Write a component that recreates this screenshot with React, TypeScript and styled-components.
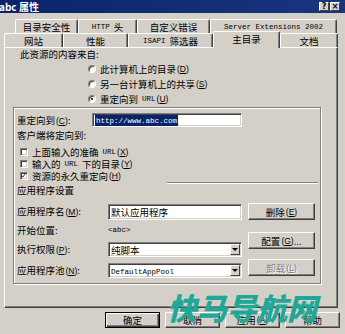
import styled, { createGlobalStyle } from "styled-components";

const GlobalStyle = createGlobalStyle`
  html, body {
    margin: 0;
    padding: 0;
    background: #d4d0c8;
    overflow: hidden;
  }
  body {
    font-family: "Noto Sans CJK SC", "DejaVu Sans", sans-serif;
    font-size: 9.5px;
    color: #000;
  }
`;

function Lat({ children }: { children: React.ReactNode }) {
  return <Mono>{children}</Mono>;
}

// accelerator key, e.g. (D)
function Acc({ k }: { k: string }) {
  return (
    <AccKey>
      (<U>{k}</U>)
    </AccKey>
  );
}

const App: React.FC = () => {
  const topTabs = [
    { label: <>目录安全性</>, w: 63 },
    { label: <><Lat>HTTP</Lat><Gap />头</>, w: 59 },
    { label: <>自定义错误</>, w: 73 },
    { label: <Lat>Server Extensions 2002</Lat>, w: 127 },
  ];

  const frontTabs = [
    { label: <>网站</>, w: 59 },
    { label: <>性能</>, w: 65 },
    { label: <><Lat>ISAPI</Lat><Gap />筛选器</>, w: 85 },
    { label: <>主目录</>, w: 67, active: true },
    { label: <>文档</>, w: 58 },
  ];

  return (
    <>
      <GlobalStyle />
      <Window>
        <TitleBar>
          <TitleText>abc 属性</TitleText>
          <TitleButtons>
            <TitleBtn>?</TitleBtn>
            <TitleBtn>×</TitleBtn>
          </TitleButtons>
        </TitleBar>

        <TabStrip>
          <TabRow $indent={15}>
            {topTabs.map((t, i) => (
              <Tab key={i} $w={t.w}>
                {t.label}
              </Tab>
            ))}
          </TabRow>
          <TabRow $indent={4}>
            {frontTabs.map((t, i) => (
              <Tab key={i} $w={t.w} $active={t.active}>
                {t.label}
              </Tab>
            ))}
          </TabRow>
        </TabStrip>

        <Panel>
          <Heading>此资源的内容来自:</Heading>
          <RadioList>
            <OptionRow>
              <Radio />
              此计算机上的目录<Acc k="D" />
            </OptionRow>
            <OptionRow>
              <Radio />
              另一台计算机上的共享<Acc k="S" />
            </OptionRow>
            <OptionRow>
              <Radio $checked />
              重定向到<Gap /><Lat>URL</Lat><Acc k="U" />
            </OptionRow>
          </RadioList>

          <Group>
            <FieldRow $h={14}>
              <Label $w={75}>重定向到<Acc k="C" />:</Label>
              <TextBox $w={150} $h={14}>
                <Selected>
                  <Lat>http://www.abc.com</Lat>
                </Selected>
              </TextBox>
            </FieldRow>
            <SubHeading>客户端将定向到:</SubHeading>
            <CheckList>
              <CheckRow>
                <CheckBox />
                上面输入的准确<Gap /><Lat>URL</Lat><Acc k="X" />
              </CheckRow>
              <CheckRow>
                <CheckBox />
                输入的<Gap /><Lat>URL</Lat><Gap />下的目录<Acc k="Y" />
              </CheckRow>
              <CheckRow>
                <CheckBox $checked>✓</CheckBox>
                资源的永久重定向<Acc k="H" />
              </CheckRow>
            </CheckList>
            <Separator />
            <SectionTitle>应用程序设置</SectionTitle>

            <AppSection>
              <AppFields>
                <FieldRow $h={17}>
                  <Label $w={91}>应用程序名<Acc k="M" />:</Label>
                  <TextBox $w={134} $h={16}>默认应用程序</TextBox>
                </FieldRow>
                <FieldRow $h={12} $mt={4}>
                  <Label $w={91}>开始位置:</Label>
                  <Lat>&lt;abc&gt;</Lat>
                </FieldRow>
                <FieldRow $h={15} $mt={6}>
                  <Label $w={91}>执行权限<Acc k="P" />:</Label>
                  <SelectBox>
                    <SelectValue>纯脚本</SelectValue>
                    <DropBtn>
                      <Arrow />
                    </DropBtn>
                  </SelectBox>
                </FieldRow>
                <FieldRow $h={15} $mt={6}>
                  <Label $w={91}>应用程序池<Acc k="N" />:</Label>
                  <SelectBox>
                    <SelectValue>
                      <Lat>DefaultAppPool</Lat>
                    </SelectValue>
                    <DropBtn>
                      <Arrow />
                    </DropBtn>
                  </SelectBox>
                </FieldRow>
              </AppFields>
              <AppButtons>
                <Button $w={67} $h={17}>
                  删除<Acc k="E" />
                </Button>
                <Button $w={67} $h={17} $mt={12}>
                  配置<Acc k="G" />...
                </Button>
                <Button $w={67} $h={17} $mt={10} $disabled>
                  卸载<Acc k="L" />
                </Button>
              </AppButtons>
            </AppSection>
          </Group>
        </Panel>

        <Footer>
          <Button $w={55} $h={16} $default>
            确定
          </Button>
          <Button $w={55} $h={16}>
            取消
          </Button>
          <Button $w={55} $h={16}>
            应用<Acc k="A" />
          </Button>
          <Button $w={55} $h={16}>
            帮助
          </Button>
        </Footer>

        <Watermark>快马导航网</Watermark>
      </Window>
    </>
  );
};

const Mono = styled.span`
  font-family: "Liberation Mono", "DejaVu Sans Mono", monospace;
  font-size: 7.5px;
`;

const AccKey = styled.span`
  font-family: "Liberation Sans", Arial, sans-serif;
  font-size: 8.5px;
  margin-left: 1px;
`;

const Gap = styled.span`
  display: inline-block;
  width: 4px;
`;

const U = styled.span`
  text-decoration: underline;
`;

const Window = styled.div`
  position: relative;
  width: 345px;
  height: 334px;
  display: flex;
  flex-direction: column;
  background: #d4d0c8;
  overflow: hidden;
`;

const TitleBar = styled.div`
  height: 13px;
  display: flex;
  align-items: center;
  justify-content: space-between;
  padding-right: 5px;
  background: linear-gradient(90deg, #0a246a, #1a3580);
  color: #fff;
`;

const TitleText = styled.div`
  margin-left: -1px;
  font-size: 10px;
  font-weight: bold;
  line-height: 13px;
`;

const TitleButtons = styled.div`
  display: flex;
  gap: 1px;
`;

const TitleBtn = styled.div`
  width: 10px;
  height: 9px;
  box-sizing: border-box;
  background: #d4d0c8;
  border: 1px solid;
  border-color: #fff #404040 #404040 #fff;
  color: #000;
  font-family: "DejaVu Sans", sans-serif;
  font-size: 8px;
  font-weight: bold;
  line-height: 7px;
  text-align: center;
`;

const TabStrip = styled.div`
  margin-top: 6px;
  display: flex;
  flex-direction: column;
`;

const TabRow = styled.div<{ $indent: number }>`
  display: flex;
  height: 14px;
  padding-left: ${(p) => p.$indent}px;
`;

const Tab = styled.div<{ $w: number; $active?: boolean }>`
  position: relative;
  z-index: ${(p) => (p.$active ? 2 : 0)};
  width: ${(p) => p.$w}px;
  height: ${(p) => (p.$active ? 17 : 14)}px;
  margin-top: ${(p) => (p.$active ? -2 : 0)}px;
  box-sizing: border-box;
  display: flex;
  align-items: center;
  justify-content: center;
  padding-bottom: ${(p) => (p.$active ? 2 : 0)}px;
  background: #d4d0c8;
  border-top: 1px solid #fff;
  border-left: 1px solid #fff;
  border-right: 1px solid #404040;
  border-radius: 2px 2px 0 0;
  box-shadow: inset -1px 0 #808080;
  line-height: 12px;
  white-space: nowrap;
`;

const Panel = styled.div`
  position: relative;
  z-index: 1;
  margin-left: 4px;
  width: 334px;
  height: 261px;
  box-sizing: border-box;
  border: 1px solid;
  border-color: #fff #404040 #404040 #fff;
  box-shadow: inset -1px -1px #808080;
  display: flex;
  flex-direction: column;
`;

const Heading = styled.div`
  height: 12px;
  line-height: 12px;
  padding-left: 15px;
`;

const RadioList = styled.div`
  margin-top: 1px;
  padding-left: 83px;
  display: flex;
  flex-direction: column;
`;

const OptionRow = styled.div`
  height: 15px;
  display: flex;
  align-items: center;
  white-space: nowrap;
  line-height: 12px;
`;

const Radio = styled.span<{ $checked?: boolean }>`
  width: 8px;
  height: 8px;
  margin-right: 4px;
  box-sizing: border-box;
  border-radius: 50%;
  background: #fff;
  border: 1px solid;
  border-color: #808080 #fff #fff #808080;
  box-shadow: inset 1px 1px #404040;
  display: flex;
  align-items: center;
  justify-content: center;
  &::after {
    content: "";
    width: 2px;
    height: 2px;
    border-radius: 50%;
    background: ${(p) => (p.$checked ? "#000" : "transparent")};
  }
`;

const Group = styled.div`
  margin: 1px 0 0 8px;
  width: 308px;
  height: 177px;
  box-sizing: border-box;
  border: 1px solid #808080;
  box-shadow: 1px 1px 0 #fff, inset 1px 1px 0 #fff;
  padding: 5px 0 0 3px;
  display: flex;
  flex-direction: column;
`;

const FieldRow = styled.div<{ $h: number; $mt?: number }>`
  height: ${(p) => p.$h}px;
  margin-top: ${(p) => p.$mt ?? 0}px;
  display: flex;
  align-items: center;
  white-space: nowrap;
  line-height: 12px;
`;

const Label = styled.div<{ $w: number }>`
  width: ${(p) => p.$w}px;
  flex-shrink: 0;
`;

const sunken = `
  box-sizing: border-box;
  background: #fff;
  border: 1px solid;
  border-color: #808080 #fff #fff #808080;
  box-shadow: inset 1px 1px #404040, inset -1px -1px #d4d0c8;
`;

const TextBox = styled.div<{ $w: number; $h: number }>`
  ${sunken}
  width: ${(p) => p.$w}px;
  height: ${(p) => p.$h}px;
  padding-left: 2px;
  display: flex;
  align-items: center;
  line-height: 12px;
`;

const Selected = styled.span`
  background: #0a246a;
  color: #fff;
  line-height: 9px;
  padding: 0 1px;
`;

const SubHeading = styled.div`
  margin-top: 2px;
  height: 12px;
  line-height: 12px;
`;

const CheckList = styled.div`
  margin-top: 5px;
  padding-left: 3px;
  display: flex;
  flex-direction: column;
`;

const CheckRow = styled.div`
  height: 12px;
  display: flex;
  align-items: center;
  white-space: nowrap;
  line-height: 12px;
`;

const CheckBox = styled.span<{ $checked?: boolean }>`
  ${sunken}
  width: 8px;
  height: 8px;
  margin-right: 4px;
  display: flex;
  align-items: center;
  justify-content: center;
  font-family: "DejaVu Sans", sans-serif;
  font-size: 7px;
  font-weight: bold;
  line-height: 6px;
  color: #000;
`;

const Separator = styled.div`
  margin-left: 150px;
  width: 151px;
  height: 0;
  border-top: 1px solid #808080;
  border-bottom: 1px solid #fff;
`;

const SectionTitle = styled.div`
  height: 12px;
  line-height: 12px;
`;

const AppSection = styled.div`
  margin-top: 7px;
  display: flex;
  gap: 6px;
`;

const AppFields = styled.div`
  width: 225px;
  display: flex;
  flex-direction: column;
`;

const AppButtons = styled.div`
  display: flex;
  flex-direction: column;
`;

const SelectBox = styled.div`
  ${sunken}
  width: 134px;
  height: 15px;
  display: flex;
  align-items: center;
  padding: 0 1px 0 2px;
`;

const SelectValue = styled.div`
  flex: 1;
  line-height: 12px;
`;

const DropBtn = styled.div`
  width: 10px;
  height: 11px;
  box-sizing: border-box;
  background: #d4d0c8;
  border: 1px solid;
  border-color: #fff #404040 #404040 #fff;
  display: flex;
  align-items: center;
  justify-content: center;
`;

const Arrow = styled.span`
  width: 0;
  height: 0;
  border-left: 3px solid transparent;
  border-right: 3px solid transparent;
  border-top: 3px solid #000;
`;

const Button = styled.div<{
  $w: number;
  $h: number;
  $mt?: number;
  $disabled?: boolean;
  $default?: boolean;
}>`
  width: ${(p) => p.$w}px;
  height: ${(p) => p.$h}px;
  margin-top: ${(p) => p.$mt ?? 0}px;
  box-sizing: border-box;
  display: flex;
  align-items: center;
  justify-content: center;
  background: #d4d0c8;
  border: 1px solid;
  border-color: ${(p) => (p.$default ? "#000" : "#fff #404040 #404040 #fff")};
  box-shadow: ${(p) =>
    p.$default
      ? "inset 1px 1px #fff, inset -1px -1px #404040, inset -2px -2px #808080"
      : "inset -1px -1px #808080"};
  color: ${(p) => (p.$disabled ? "#808080" : "#000")};
  text-shadow: ${(p) => (p.$disabled ? "1px 1px #fff" : "none")};
  line-height: 12px;
  white-space: nowrap;
`;

const Footer = styled.div`
  margin-top: 4px;
  padding-right: 5px;
  display: flex;
  justify-content: flex-end;
  gap: 5px;
`;

const Watermark = styled.div`
  position: absolute;
  left: 167px;
  top: 292px;
  z-index: 5;
  font-family: "Noto Sans CJK SC", sans-serif;
  font-size: 30px;
  font-weight: 900;
  font-style: italic;
  line-height: 30px;
  color: #1fa898;
  white-space: nowrap;
`;

export default App;
